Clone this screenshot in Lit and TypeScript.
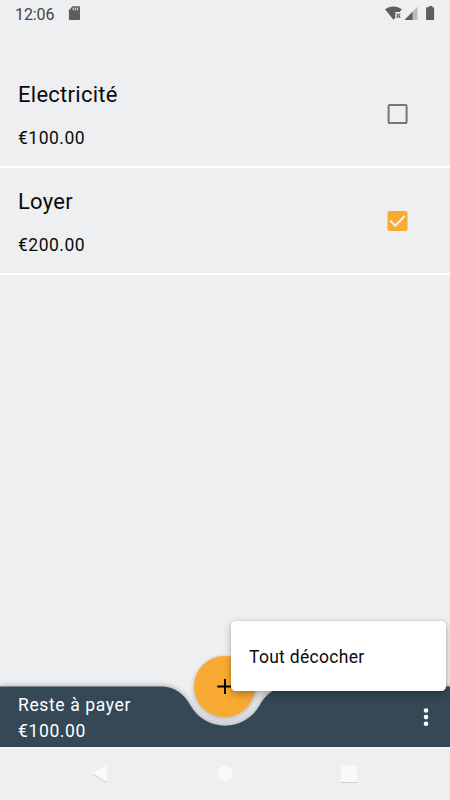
import { LitElement, html, css, svg } from "lit";
import { customElement, property, state } from "lit/decorators.js";

interface Bill {
  name: string;
  amount: number;
  paid: boolean;
}

const euro = (n: number) => `€${n.toFixed(2)}`;

@customElement("status-bar")
class StatusBar extends LitElement {
  static styles = css`
    :host {
      display: flex;
      height: 28px;
      flex: none;
      justify-content: space-between;
    }
    .time {
      font-size: 16px;
      line-height: 29px;
      letter-spacing: -0.1px;
      padding-left: 15px;
      width: 53px;
      color: #444546;
    }
    .left {
      display: flex;
    }
    svg {
      display: block;
    }
  `;

  render() {
    return html`
      <div class="left">
        <div class="time">12:06</div>
        <svg width="12" height="28" viewBox="68 0 12 28">
          <path d="M72.5 6.3H79a1 1 0 0 1 1 1V19a1 1 0 0 1-1 1H69.9a1 1 0 0 1-1-1V10.200z" fill="#5d5e5f" />
          <path d="M73.200 7.600v2.700M75.400 7.600v2.700M77.600 7.600v2.700" stroke="#eeeff1" stroke-width="1" />
        </svg>
      </div>
      <svg width="70" height="28" viewBox="380 0 70 28">
        <path d="M385 9.300C389.500 5.400 397.300 5.400 401.900 9.300L399.600 12.100H395.300V17.700L393.500 19.700z" fill="#5d5e5f" />
        <path d="M396.600 13.600l3.700 4.300M400.300 13.600l-3.700 4.300" stroke="#5d5e5f" stroke-width="1.300" />
        <path d="M417.500 6.700V20H404.500z" fill="#b9babc" />
        <path d="M412.500 11.800V20H404.500z" fill="#5d5e5f" />
        <path d="M427.500 7.300H428.800V6H432.300V7.300H433.500a.6.6 0 0 1 .6.6V19.500a.6.6 0 0 1-.6.6H426.700a.6.6 0 0 1-.6-.6V7.900a.6.6 0 0 1 .6-.6z" fill="#5d5e5f" />
      </svg>
    `;
  }
}

@customElement("bill-row")
class BillRow extends LitElement {
  @property({ attribute: false }) bill!: Bill;

  static styles = css`
    :host {
      display: flex;
      box-sizing: border-box;
      height: 106.5px;
      padding: 1px 40px 0 18px;
      border-bottom: 2px solid #fff;
      justify-content: space-between;
      align-items: center;
      color: #0b0b0c;
    }
    .name {
      font-size: 22px;
      line-height: 30px;
      letter-spacing: 0.27px;
      margin-top: 2px;
    }
    .amount {
      font-size: 17.5px;
      line-height: 24px;
      letter-spacing: 0.5px;
      margin-top: 16px;
    }
    svg {
      display: block;
      flex: none;
    }
  `;

  render() {
    const mark = this.bill.paid
      ? svg`<rect x="1" y="1" width="20" height="20" rx="2" fill="#f9aa33"/><path d="M3.800 10.800l5 5 9.400-9.700" fill="none" stroke="#eeeff1" stroke-width="2.100"/>`
      : svg`<rect x="2.100" y="2.100" width="18" height="18" rx="1.200" fill="none" stroke="#747577" stroke-width="2"/>`;
    return html`
      <div>
        <div class="name">${this.bill.name}</div>
        <div class="amount">${euro(this.bill.amount)}</div>
      </div>
      <svg width="24" height="22" viewBox="-0.500 0 24 22">${mark}</svg>
    `;
  }
}

@customElement("bottom-bar")
class BottomBar extends LitElement {
  @property({ type: Number }) remaining = 0;

  static styles = css`
    :host {
      display: block;
      position: relative;
      height: 61px;
      flex: none;
    }
    .shape {
      position: absolute;
      inset: 0;
      overflow: visible;
      filter: drop-shadow(0 0 3px rgba(0, 0, 0, 0.34));
    }
    .content {
      position: relative;
      display: flex;
      height: 100%;
      align-items: center;
      justify-content: space-between;
      padding: 0 18px;
      color: #fff;
      font-size: 17.5px;
      line-height: 26px;
      letter-spacing: 0.63px;
    }
    .totals {
      padding-top: 2px;
    }
    .fab {
      position: absolute;
      left: 194px;
      top: -30.500px;
      width: 61px;
      height: 61px;
      border-radius: 50%;
      background: #f9aa33;
      box-shadow: 0 3px 6px rgba(0, 0, 0, 0.2), 0 0 3px rgba(0, 0, 0, 0.1);
    }
    .fab svg {
      display: block;
    }
    .more {
      display: block;
      margin-right: 3px;
    }
  `;

  render() {
    return html`
      <svg class="shape" width="450" height="61" viewBox="0 0 450 61">
        <path
          d="M0 0.500H161C174 0.500 184 7.500 190.500 19.500A39.500 39.500 0 0 0 259.500 19.500C266 7.500 276 0.500 289 0.500H450V61.300H0z"
          fill="#344955"
        />
      </svg>
      <div class="content">
        <div class="totals">
          <div>Reste à payer</div>
          <div>${euro(this.remaining)}</div>
        </div>
        <svg class="more" width="6" height="20" viewBox="0 0 6 20" fill="#fff">
          <circle cx="3" cy="3.500" r="2.300" />
          <circle cx="3" cy="10.100" r="2.300" />
          <circle cx="3" cy="16.700" r="2.300" />
        </svg>
      </div>
      <div class="fab">
        <svg width="61" height="61" viewBox="0 0 61 61">
          <path d="M23.300 30.500h15M31 23v15" stroke="#000" stroke-width="2" />
        </svg>
      </div>
    `;
  }
}

@customElement("nav-bar")
class NavBar extends LitElement {
  static styles = css`
    :host {
      display: block;
      height: 53px;
      flex: none;
      position: relative;
      background: #eeeff1;
    }
    svg {
      display: block;
    }
    .keys {
      filter: drop-shadow(0 1px 0.500px rgba(0, 0, 0, 0.13));
    }
  `;

  render() {
    return html`
      <svg width="450" height="53" viewBox="0 0 450 53" fill="#f8f9fb">
        <rect y="0.400" width="450" height="1" fill="#fafafa" />
        <g class="keys">
          <path d="M91.900 26L105.800 18.200a.8.8 0 0 1 1.200.7V33.800a.8.8 0 0 1-1.200.7z" />
          <rect x="341" y="18.500" width="16.500" height="16.500" rx="1" />
        </g>
        <circle cx="224.700" cy="26.500" r="7.700" />
      </svg>
    `;
  }
}

@customElement("app-root")
class AppRoot extends LitElement {
  @state() private bills: Bill[] = [
    { name: "Electricité", amount: 100, paid: false },
    { name: "Loyer", amount: 200, paid: true },
  ];

  static styles = css`
    :host {
      display: flex;
      flex-direction: column;
      position: relative;
      width: 450px;
      height: 800px;
      overflow: hidden;
      background: #eeeff1;
      font-family: Roboto, sans-serif;
    }
    .list {
      flex: 1;
      padding-top: 33.500px;
    }
    .menu {
      position: absolute;
      right: 4px;
      bottom: 109px;
      box-sizing: border-box;
      width: 215px;
      height: 70px;
      padding: 2px 18px 0;
      border-radius: 4.500px;
      background: #fff;
      color: #0b0b0c;
      font-size: 17.5px;
      line-height: 68px;
      letter-spacing: 0.3px;
      box-shadow: 0 4px 9px rgba(0, 0, 0, 0.26), 0 0 3px rgba(0, 0, 0, 0.14);
    }
  `;

  render() {
    const remaining = this.bills.filter((b) => !b.paid).reduce((sum, b) => sum + b.amount, 0);
    return html`
      <status-bar></status-bar>
      <div class="list">${this.bills.map((b) => html`<bill-row .bill=${b}></bill-row>`)}</div>
      <bottom-bar .remaining=${remaining}></bottom-bar>
      <nav-bar></nav-bar>
      <div class="menu">Tout décocher</div>
    `;
  }
}
